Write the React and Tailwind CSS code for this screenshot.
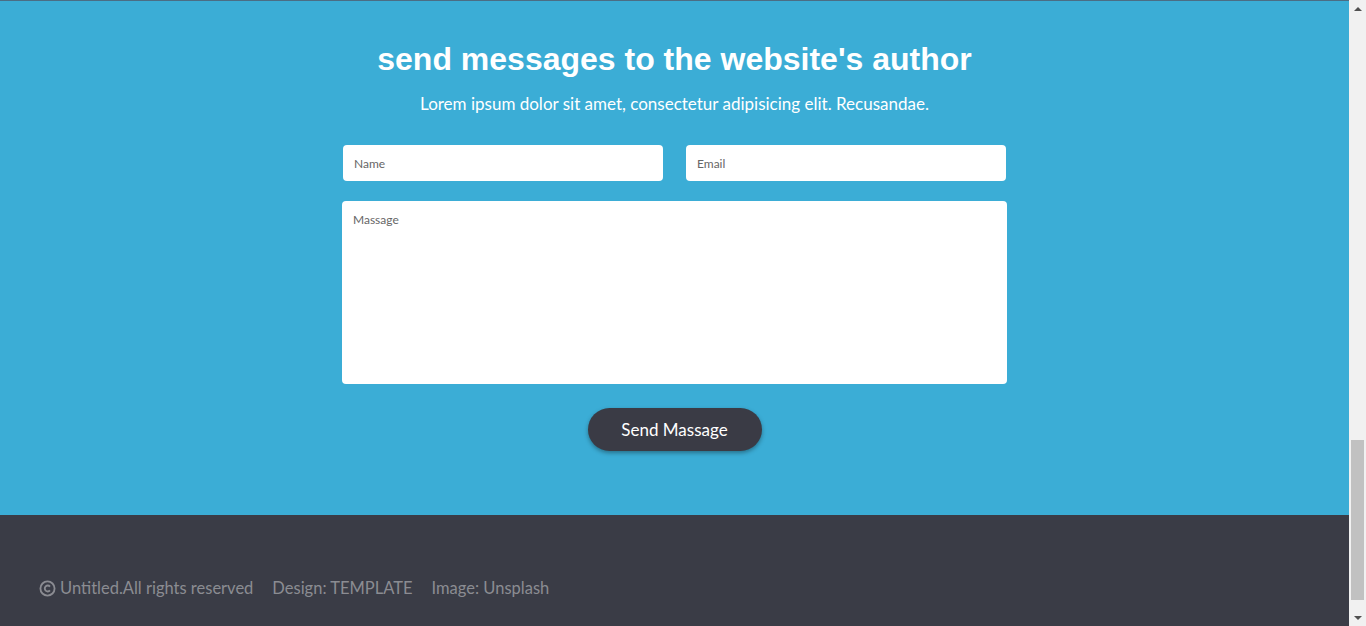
export default function App() {
  return (
    <div className="flex h-[626px] w-full overflow-hidden font-['Lato','Open_Sans',sans-serif]">
      {/* Page content */}
      <div className="flex flex-1 flex-col">
        {/* Contact section */}
        <section className="h-[515px] border-t border-[#4b6d84] bg-[#3badd6] pt-[38px]">
          <h2 className="text-center font-['Liberation_Sans',Arial,sans-serif] text-[32px] font-bold leading-[40px] text-white">
            send messages to the website's author
          </h2>
          <p className="mt-[13px] text-center text-[17px] leading-[24px] text-white">
            Lorem ipsum dolor sit amet, consectetur adipisicing elit. Recusandae.
          </p>

          <form className="mx-auto mt-[29px] w-[665px]">
            <div className="flex justify-between px-px">
              <input
                placeholder="Name"
                className="h-[36px] w-[320px] rounded-[4px] bg-white px-[11px] text-[12px] text-[#555] outline-none placeholder:text-[#666]"
              />
              <input
                placeholder="Email"
                className="h-[36px] w-[320px] rounded-[4px] bg-white px-[11px] text-[12px] text-[#555] outline-none placeholder:text-[#666]"
              />
            </div>
            <textarea
              placeholder="Massage"
              className="mt-[20px] block h-[183px] w-full resize-none rounded-[4px] bg-white px-[11px] py-[10px] text-[12px] text-[#555] outline-none placeholder:text-[#666]"
            />
            <div className="mt-[24px] flex justify-center">
              <button
                type="button"
                className="h-[43px] w-[174px] rounded-full bg-[#3a3b45] text-[17px] text-white shadow-[0_2px_4px_rgba(0,0,0,0.35)]"
              >
                Send Massage
              </button>
            </div>
          </form>
        </section>

        {/* Footer */}
        <footer className="flex flex-1 items-start bg-[#3a3c46] pl-[39px] pt-[62px]">
          <div className="flex items-center gap-[19px] text-[16.5px] leading-[22px] text-[#8b8c92]">
            <span className="flex items-center gap-[4px]">
              <svg width="17" height="17" viewBox="0 0 24 24" fill="none" stroke="currentColor" strokeWidth="2.6">
                <circle cx="12" cy="12" r="10" />
                <path d="M15.5 9.2a4.2 4.2 0 1 0 0 5.6" />
              </svg>
              Untitled.All rights reserved
            </span>
            <span>Design: TEMPLATE</span>
            <span>Image: Unsplash</span>
          </div>
        </footer>
      </div>

      {/* Scrollbar */}
      <div className="flex w-[17px] flex-col items-center bg-[#f1f1f1]">
        <div className="flex h-[17px] items-center justify-center">
          <div className="h-0 w-0 border-x-[4px] border-b-[4px] border-x-transparent border-b-[#505050]" />
        </div>
        <div className="flex flex-1 flex-col">
          <div className="h-[423px]" />
          <div className="h-[160px] w-[13px] bg-[#c1c1c1]" />
        </div>
        <div className="flex h-[17px] items-center justify-center">
          <div className="h-0 w-0 border-x-[4px] border-t-[4px] border-x-transparent border-t-[#505050]" />
        </div>
      </div>
    </div>
  );
}
